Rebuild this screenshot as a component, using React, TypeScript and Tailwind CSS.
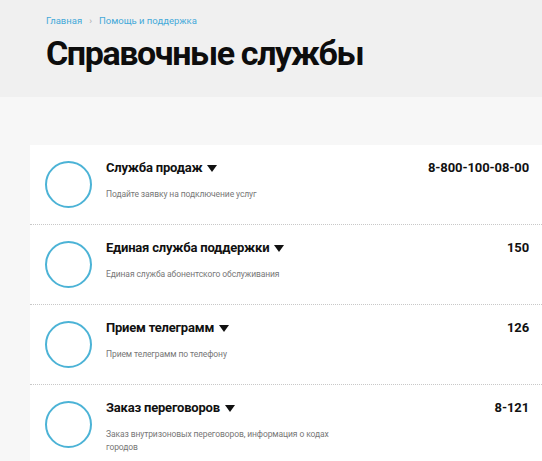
import React from 'react';

interface Service {
  title: string;
  desc: string;
  phone: string;
}

const services: Service[] = [
  { title: 'Служба продаж', desc: 'Подайте заявку на подключение услуг', phone: '8-800-100-08-00' },
  { title: 'Единая служба поддержки', desc: 'Единая служба абонентского обслуживания', phone: '150' },
  { title: 'Прием телеграмм', desc: 'Прием телеграмм по телефону', phone: '126' },
  {
    title: 'Заказ переговоров',
    desc: 'Заказ внутризоновых переговоров, информация о кодах городов',
    phone: '8-121',
  },
];

const ServiceRow: React.FC<{ item: Service; last: boolean }> = ({ item, last }) => (
  <div
    className={`flex h-[80px] items-start pl-[15px] pr-[13px] pt-[15px] ${
      last ? '' : 'border-b border-dotted border-[#c8c8c8]'
    }`}
  >
    <div className="mt-[1px] h-[47px] w-[47px] shrink-0 rounded-full border-2 border-[#4cb3d6]" />
    <div className="ml-[14px] flex-1">
      <div className="flex items-center text-[13px] font-bold leading-[16px] tracking-[-0.2px] text-[#111]">
        {item.title}
        <svg width="10" height="7" viewBox="0 0 10 7" className="ml-[5px]">
          <path d="M0 0h10L5 7z" fill="#111" />
        </svg>
      </div>
      <div className="mt-[12px] w-[240px] text-[8.5px] leading-[13px] tracking-[-0.1px] text-[#777]">
        {item.desc}
      </div>
    </div>
    <div className="text-[13px] font-bold leading-[16px] tracking-[-0.1px] text-[#111]">{item.phone}</div>
  </div>
);

export default function App() {
  return (
    <div className="min-h-[461px] w-[542px] overflow-hidden bg-[#f7f7f7] font-['Roboto',sans-serif]">
      <div className="h-[97px] bg-[#f0f0f0] pl-[46px] pt-[15px]">
        <div className="flex items-center text-[9.5px] leading-[12px] text-[#44a9d9]">
          <span>Главная</span>
          <span className="mx-[7px] text-[#aaa]">›</span>
          <span>Помощь и поддержка</span>
        </div>
        <h1 className="mt-[6px] text-[34px] font-bold leading-[40px] tracking-[-1.4px] text-[#0d0d0d]">
          Справочные службы
        </h1>
      </div>
      <div className="pl-[30px] pt-[48px]">
        <div className="bg-white">
          {services.map((s, i) => (
            <ServiceRow key={s.title} item={s} last={i === services.length - 1} />
          ))}
        </div>
      </div>
    </div>
  );
}
